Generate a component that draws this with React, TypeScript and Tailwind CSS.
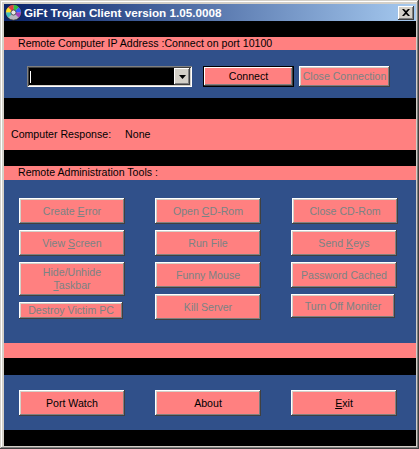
import React from "react";

const raised =
  "shadow-[inset_-1px_-1px_0_#404040,inset_1px_1px_0_#ffffff,inset_-2px_-2px_0_#808080,inset_2px_2px_0_#d4d0c8]";
const defRaised =
  "shadow-[inset_0_0_0_1px_#000000,inset_-2px_-2px_0_#404040,inset_2px_2px_0_#ffffff,inset_-3px_-3px_0_#808080]";
const sunken =
  "shadow-[inset_1px_1px_0_#808080,inset_-1px_-1px_0_#ffffff,inset_2px_2px_0_#404040,inset_-2px_-2px_0_#d4d0c8]";

const font = { fontFamily: '"Liberation Sans", Arial, sans-serif' };

function Btn({
  children,
  w = "w-[106px]",
  h = "h-[26px]",
  disabled = true,
  className = "",
}: {
  children: React.ReactNode;
  w?: string;
  h?: string;
  disabled?: boolean;
  className?: string;
}) {
  return (
    <div
      className={`${w} ${h} ${raised} bg-[#ff8080] flex items-center justify-center text-center text-[10.6px] leading-[13px] ${
        disabled ? "text-[#7a8384]" : "text-black"
      } ${className}`}
    >
      <span>{children}</span>
    </div>
  );
}

function Disc() {
  return (
    <svg width="17" height="17" viewBox="0 0 16 16">
      <circle cx="8" cy="8" r="7.3" fill="#b8b8c0" stroke="#202020" strokeWidth="0.8" />
      <path d="M8 8 L8 1 A7 7 0 0 1 13 3 Z" fill="#30c040" />
      <path d="M8 8 L13 3 A7 7 0 0 1 15 8 Z" fill="#3060ff" />
      <path d="M8 8 L15 8 A7 7 0 0 1 13 13 Z" fill="#a040c0" />
      <path d="M8 8 L1 8 A7 7 0 0 1 3 3 Z" fill="#ffe020" />
      <path d="M8 8 L3 3 A7 7 0 0 1 8 1 Z" fill="#e04040" />
      <path d="M8 8 L3 13 A7 7 0 0 1 1 8 Z" fill="#40c0c0" />
      <circle cx="8" cy="8" r="2.4" fill="#e8e8e8" stroke="#404040" strokeWidth="0.8" />
    </svg>
  );
}

export default function App() {
  return (
    <div
      style={font}
      className="w-[419px] h-[449px] bg-[#d4d0c8] pt-[4px] pl-[4px] pr-[3px] pb-[3px] flex flex-col shadow-[inset_-1px_-1px_0_#404040,inset_1px_1px_0_#d4d0c8,inset_-2px_-2px_0_#808080,inset_2px_2px_0_#ffffff]"
    >
      {/* Title bar */}
      <div className="h-[17px] flex items-center bg-[linear-gradient(to_right,#0a246a,#a6caf0)] pl-[1px] pr-[2px]">
        <Disc />
        <span className="ml-[2px] text-white font-bold text-[11.7px] leading-none">
          GiFt Trojan Client version 1.05.0008
        </span>
        <div className="ml-auto w-[16px] h-[14px] bg-[#d4d0c8] shadow-[inset_-1px_-1px_0_#404040,inset_1px_1px_0_#ffffff,inset_-2px_-2px_0_#808080] flex items-center justify-center">
          <svg width="8" height="7" viewBox="0 0 8 7">
            <path d="M0 0 L2 0 L4 2 L6 0 L8 0 L5 3.5 L8 7 L6 7 L4 5 L2 7 L0 7 L3 3.5 Z" fill="#000" />
          </svg>
        </div>
      </div>

      <div className="h-[16px] bg-black" />
      <div className="h-[13px] bg-[#ff8080] flex items-center pl-[14px] text-[10.6px] text-black">
        Remote Computer IP Address :Connect on port 10100
      </div>

      {/* Connect section */}
      <div className="h-[48px] bg-[#30508a] pt-[16px] pl-[23px] flex items-start">
        <div className={`w-[165px] h-[21px] bg-black ${sunken} flex items-center p-[2px] relative`}>
          <div className="ml-[1px] w-[1px] h-[12px] bg-white" />
          <div className={`ml-auto w-[16px] h-[17px] bg-[#d4d0c8] ${raised} flex items-center justify-center`}>
            <svg width="7" height="4" viewBox="0 0 7 4">
              <path d="M0 0 L7 0 L3.5 4 Z" fill="#000" />
            </svg>
          </div>
        </div>
        <div
          className={`ml-[11px] w-[91px] h-[21px] bg-[#ff8080] ${defRaised} flex items-center justify-center text-[10.6px] text-black`}
        >
          Connect
        </div>
        <Btn w="w-[91px]" h="h-[21px]" className="ml-[5px]">
          Close Connection
        </Btn>
      </div>

      <div className="h-[21px] bg-black" />
      <div className="h-[31px] bg-[#ff8080] flex items-center pl-[7px] text-[10.6px] text-black">
        <span>Computer Response:</span>
        <span className="ml-[14px]">None</span>
      </div>
      <div className="h-[16px] bg-black" />
      <div className="h-[14px] bg-[#ff8080] flex items-center pl-[14px] text-[10.6px] text-black">
        Remote Administration Tools :
      </div>

      {/* Tools */}
      <div className="h-[163px] bg-[#30508a] pt-[18px] pl-[15px] flex items-start">
        <div className="flex flex-col gap-[6px]">
          <Btn>
            Create <u>E</u>rror
          </Btn>
          <Btn>
            View <u>S</u>creen
          </Btn>
          <Btn h="h-[34px]">
            Hide/Unhide
            <br />
            <u>T</u>askbar
          </Btn>
          <Btn w="w-[104px]" h="h-[17px]">
            Destroy Victim PC
          </Btn>
        </div>
        <div className="ml-[30px] flex flex-col gap-[6px]">
          <Btn>
            Open <u>C</u>D-Rom
          </Btn>
          <Btn>Run File</Btn>
          <Btn>Funny Mouse</Btn>
          <Btn>Kill Server</Btn>
        </div>
        <div className="ml-[30px] flex flex-col gap-[6px]">
          <Btn className="ml-[1px]">Close CD-Rom</Btn>
          <Btn>
            Send <u>K</u>eys
          </Btn>
          <Btn>Password Cached</Btn>
          <Btn w="w-[104px]" h="h-[24px]">
            Turn Off Moniter
          </Btn>
        </div>
      </div>

      <div className="h-[15px] bg-[#ff8080]" />
      <div className="h-[17px] bg-black" />

      {/* Bottom buttons */}
      <div className="h-[55px] bg-[#30508a] pt-[15px] pl-[15px] flex items-start gap-[30px]">
        <Btn disabled={false}>Port Watch</Btn>
        <Btn disabled={false}>About</Btn>
        <Btn disabled={false}>
          <u>E</u>xit
        </Btn>
      </div>
      <div className="h-[16px] bg-black" />
    </div>
  );
}
